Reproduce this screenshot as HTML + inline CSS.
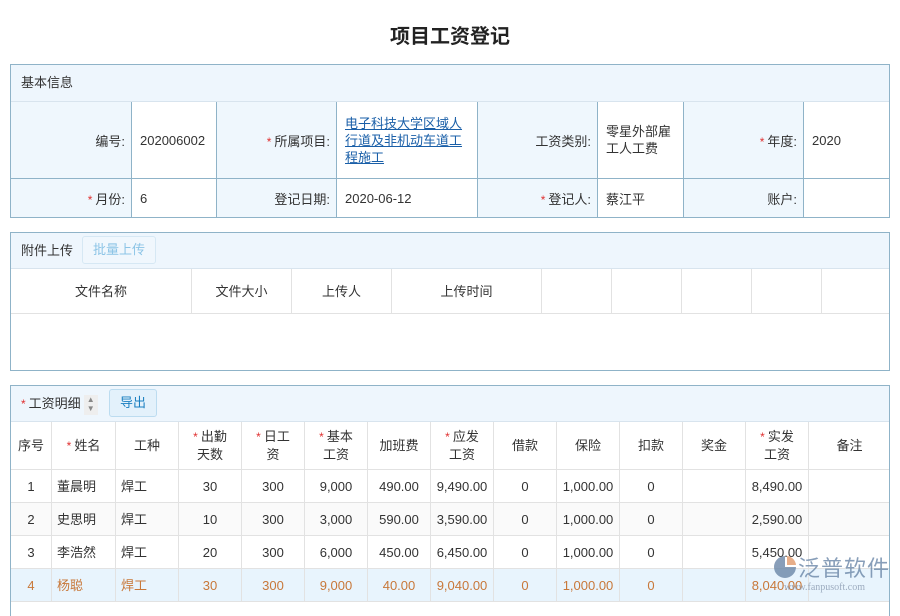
<!DOCTYPE html>
<html><head><meta charset="utf-8"><style>
body{margin:0;width:900px;height:600px;overflow:hidden;background:#fff;font-family:"Liberation Sans","Noto Sans CJK SC",sans-serif;font-size:13px;color:#333;position:relative}
.title{position:absolute;top:20px;left:0;width:900px;text-align:center;font-size:20px;font-weight:bold;color:#222}
.box{position:absolute;left:10px;width:878px;border:1px solid #8fb3c8;background:#fff;overflow:hidden}
.hd{background:#eef6fd;height:36px;line-height:36px;padding-left:10px;border-bottom:1px solid #d8e4ee;position:relative}
.hd2{height:35px;line-height:35px}
table{border-collapse:collapse;table-layout:fixed}
.info td{border:1px solid #8fb3c8;padding:0 8px;vertical-align:middle}
.info td.l{background:#eff7fd;text-align:right;padding-right:6px}
.r{color:#e03030;font-size:12px;margin-right:3px}
a{color:#1a5fa8;text-decoration:underline}
.g td{border:1px solid #e2e2e2;text-align:center;padding:0 2px;line-height:17px}
.btn{position:absolute;top:4px;height:26px;line-height:26px;border:1px solid #bcdcf0;border-radius:3px;background:#e3f1fb;padding:0 10px;color:#1a7fc0}
</style></head><body>
<div class="title">项目工资登记</div>

<div class="box" style="top:64px;height:152px">
<div class="hd">基本信息</div>
<table class="info" style="width:880px;margin:-1px 0 0 -1px">
<colgroup><col style="width:121px"><col style="width:85px"><col style="width:120px"><col style="width:141px"><col style="width:120px"><col style="width:86px"><col style="width:120px"><col style="width:87px"></colgroup>
<tr style="height:77px"><td class="l">编号:</td><td>202006002</td><td class="l"><span class="r">*</span>所属项目:</td><td style="line-height:17px"><a>电子科技大学区域人行道及非机动车道工程施工</a></td><td class="l">工资类别:</td><td style="line-height:17px;vertical-align:top;padding-top:21px">零星外部雇工人工费</td><td class="l"><span class="r">*</span>年度:</td><td>2020</td></tr>
<tr style="height:39px"><td class="l"><span class="r">*</span>月份:</td><td>6</td><td class="l">登记日期:</td><td>2020-06-12</td><td class="l"><span class="r">*</span>登记人:</td><td>蔡江平</td><td class="l">账户:</td><td></td></tr>
</table></div>

<div class="box" style="top:232px;height:137px">
<div class="hd hd2">附件上传<span class="btn" style="left:71px;top:3px;color:#8cc4e6;background:#f0f7fd;border-color:#d6e8f4">批量上传</span></div>
<table class="g" style="width:880px;margin:-1px 0 0 -1px">
<colgroup><col style="width:181px"><col style="width:100px"><col style="width:100px"><col style="width:150px"><col style="width:70px"><col style="width:70px"><col style="width:70px"><col style="width:70px"><col style="width:69px"></colgroup>
<tr style="height:45px"><td>文件名称</td><td>文件大小</td><td>上传人</td><td>上传时间</td><td></td><td></td><td></td><td></td><td></td></tr>
</table></div>

<div class="box" style="top:385px;height:230px;border-bottom:none">
<div class="hd hd2"><span class="r">*</span>工资明细<span style="display:inline-block;width:14px;height:20px;background:#eee;vertical-align:middle;margin-left:3px;font-size:8px;line-height:9px;color:#888;text-align:center">▲<br>▼</span><span class="btn" style="left:98px;top:3px">导出</span></div>
<table class="g" style="width:880px;margin:-1px 0 0 -1px">
<colgroup><col style="width:41px"><col style="width:64px"><col style="width:63px"><col style="width:63px"><col style="width:63px"><col style="width:63px"><col style="width:63px"><col style="width:63px"><col style="width:63px"><col style="width:63px"><col style="width:63px"><col style="width:63px"><col style="width:63px"><col style="width:82px"></colgroup>
<tr style="height:48px"><td>序号</td><td><span class="r">*</span>姓名</td><td>工种</td><td><span class="r">*</span>出勤<br>天数</td><td><span class="r">*</span>日工<br>资</td><td><span class="r">*</span>基本<br>工资</td><td>加班费</td><td><span class="r">*</span>应发<br>工资</td><td>借款</td><td>保险</td><td>扣款</td><td>奖金</td><td><span class="r">*</span>实发<br>工资</td><td>备注</td></tr>
<tr style="height:33px"><td>1</td><td style="text-align:left;padding-left:5px">董晨明</td><td style="text-align:left;padding-left:5px">焊工</td><td>30</td><td>300</td><td>9,000</td><td>490.00</td><td>9,490.00</td><td>0</td><td>1,000.00</td><td>0</td><td></td><td>8,490.00</td><td></td></tr>
<tr style="height:33px;background:#fafafa"><td>2</td><td style="text-align:left;padding-left:5px">史思明</td><td style="text-align:left;padding-left:5px">焊工</td><td>10</td><td>300</td><td>3,000</td><td>590.00</td><td>3,590.00</td><td>0</td><td>1,000.00</td><td>0</td><td></td><td>2,590.00</td><td></td></tr>
<tr style="height:33px"><td>3</td><td style="text-align:left;padding-left:5px">李浩然</td><td style="text-align:left;padding-left:5px">焊工</td><td>20</td><td>300</td><td>6,000</td><td>450.00</td><td>6,450.00</td><td>0</td><td>1,000.00</td><td>0</td><td></td><td>5,450.00</td><td></td></tr>
<tr style="height:33px;background:#e8f4fd;color:#c8783a"><td>4</td><td style="text-align:left;padding-left:5px">杨聪</td><td style="text-align:left;padding-left:5px">焊工</td><td>30</td><td>300</td><td>9,000</td><td>40.00</td><td>9,040.00</td><td>0</td><td>1,000.00</td><td>0</td><td></td><td>8,040.00</td><td></td></tr>
</table></div>

<div style="position:absolute;left:772px;top:552px;width:120px;height:44px;opacity:.8">
<svg width="26" height="26" style="position:absolute;left:0;top:2px" viewBox="0 0 26 26"><path d="M13 2 A11 11 0 1 0 24 13 L13 13 Z" fill="#6b87a8"/><path d="M15 2 A10 10 0 0 1 24 11 L15 11 Z" fill="#e29a6c"/></svg>
<div style="position:absolute;left:26px;top:0;font-size:22px;color:#6b87a8;letter-spacing:1px;font-family:'Noto Sans CJK SC',sans-serif;line-height:30px">泛普软件</div>
<div style="position:absolute;left:12px;top:30px;font-size:10px;color:#8a9ab0;font-family:'Liberation Serif',serif">www.fanpusoft.com</div>
</div>
</body></html>
